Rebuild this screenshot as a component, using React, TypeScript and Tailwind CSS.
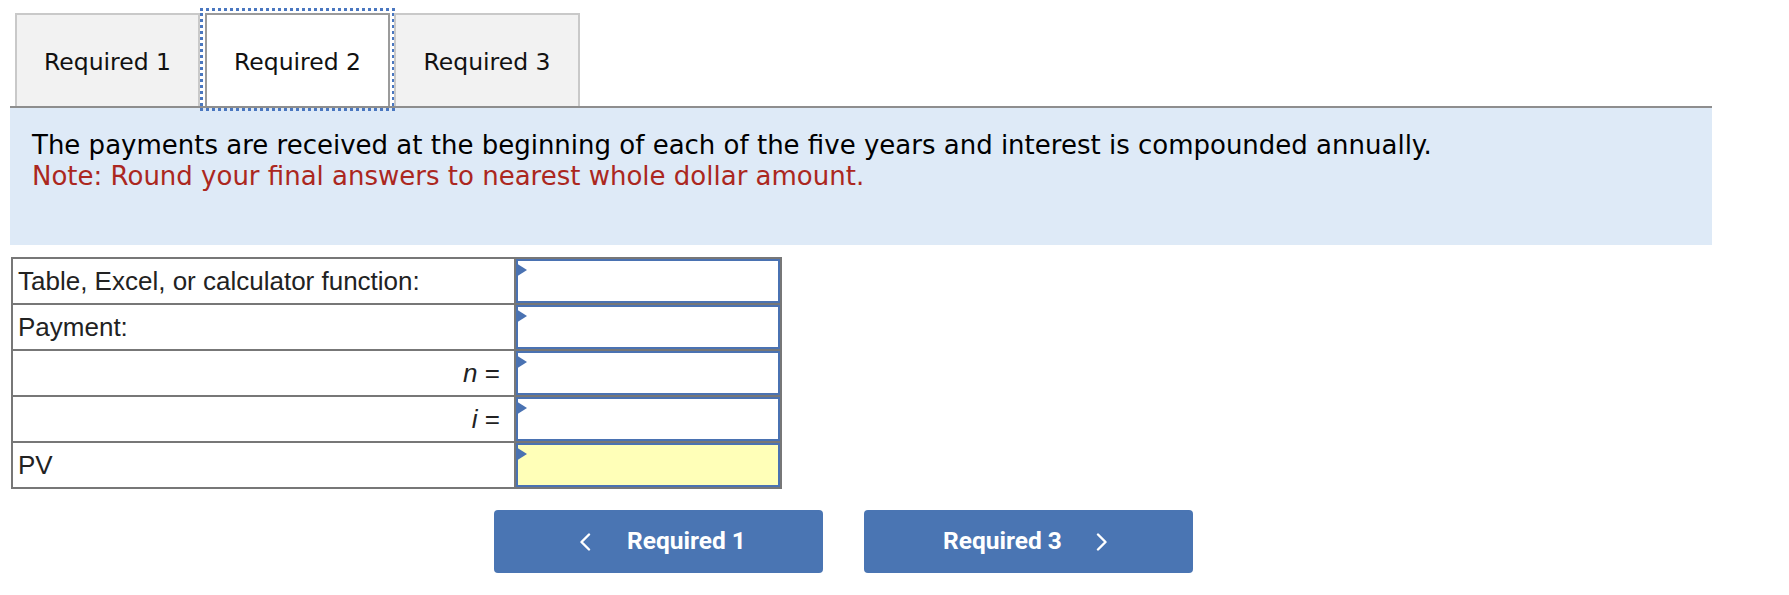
import React from 'react';

const rows = [
  { label: 'Table, Excel, or calculator function:', kind: 'left' },
  { label: 'Payment:', kind: 'left' },
  { label: 'n', kind: 'var' },
  { label: 'i', kind: 'var' },
  { label: 'PV', kind: 'pv' },
];

const Chevron = ({ dir }: { dir: 'left' | 'right' }) => (
  <svg width="12" height="18" viewBox="0 0 12 18" fill="none">
    <polyline
      points={dir === 'left' ? '10,1.5 2.5,9 10,16.5' : '2,1.5 9.5,9 2,16.5'}
      stroke="white"
      strokeWidth="2.4"
      strokeLinecap="round"
      strokeLinejoin="round"
    />
  </svg>
);

const App: React.FC = () => {
  return (
    <div className="w-[1789px] h-[595px] bg-white overflow-hidden">
      {/* Tabs */}
      <div className="pt-[13px]">
        <div className="ml-[10px] w-[1702px] h-[95px] border-b-2 border-[#8e8e8e] flex items-end pl-[5px] font-['DejaVu_Sans',sans-serif] text-[23.5px] text-[#111]">
          <div className="w-[185px] h-[93px] bg-[#f2f2f2] border-2 border-b-0 border-[#c9c9c9] flex items-center justify-center pt-[4px]">
            Required 1
          </div>
          <div className="ml-[5px] w-[185px] h-[93px] bg-white border-2 border-b-0 border-[#9b9b9b] flex items-center justify-center pt-[4px] outline-dotted outline-[3px] outline-[#4a77c0] outline-offset-[2px]">
            Required 2
          </div>
          <div className="ml-[4px] w-[186px] h-[93px] bg-[#f2f2f2] border-2 border-b-0 border-[#c9c9c9] flex items-center justify-center pt-[4px]">
            Required 3
          </div>
        </div>
      </div>

      {/* Instructions */}
      <div className="ml-[10px] w-[1702px] h-[137px] bg-[#deeaf7] pl-[22px] pt-[22px] font-['DejaVu_Sans',sans-serif] text-[26px] leading-[31px]">
        <p className="text-black">
          The payments are received at the beginning of each of the five years and interest is compounded annually.
        </p>
        <p className="text-[#ab2720]">Note: Round your final answers to nearest whole dollar amount.</p>
      </div>

      {/* Answer table */}
      <div className="ml-[11px] mt-[12px] w-[771px] bg-[#777777] p-[2px] grid grid-cols-[501px_264px] gap-[2px] font-['Liberation_Sans',Arial,sans-serif] text-[26px] text-[#222]">
        {rows.map((r) => (
          <React.Fragment key={r.label}>
            {r.kind === 'var' ? (
              <div className="h-[44px] bg-white flex items-center justify-end pr-[14px]">
                <span className="italic">{r.label}</span>
                <span>&nbsp;=</span>
              </div>
            ) : (
              <div className="h-[44px] bg-white flex items-center pl-[5px]">{r.label}</div>
            )}
            <div
              className={`h-[44px] border-2 border-[#4a72b2] relative ${
                r.kind === 'pv' ? 'bg-[#ffffb8]' : 'bg-white'
              }`}
            >
              <div className="absolute -left-[2px] top-[2px] w-0 h-0 border-l-[11px] border-l-[#4a72b2] border-y-[7px] border-y-transparent" />
            </div>
          </React.Fragment>
        ))}
      </div>

      {/* Navigation */}
      <div className="ml-[494px] mt-[21px] flex gap-[41px] font-['Roboto',sans-serif] font-bold text-[24.5px] text-white">
        <button className="w-[329px] h-[63px] rounded-[4px] bg-[#4a75b3] flex items-center justify-center gap-[36px] pl-[8px]">
          <Chevron dir="left" />
          <span>Required 1</span>
        </button>
        <button className="w-[329px] h-[63px] rounded-[4px] bg-[#4a75b3] flex items-center justify-center gap-[34px] pr-[6px]">
          <span>Required 3</span>
          <Chevron dir="right" />
        </button>
      </div>
    </div>
  );
};

export default App;
